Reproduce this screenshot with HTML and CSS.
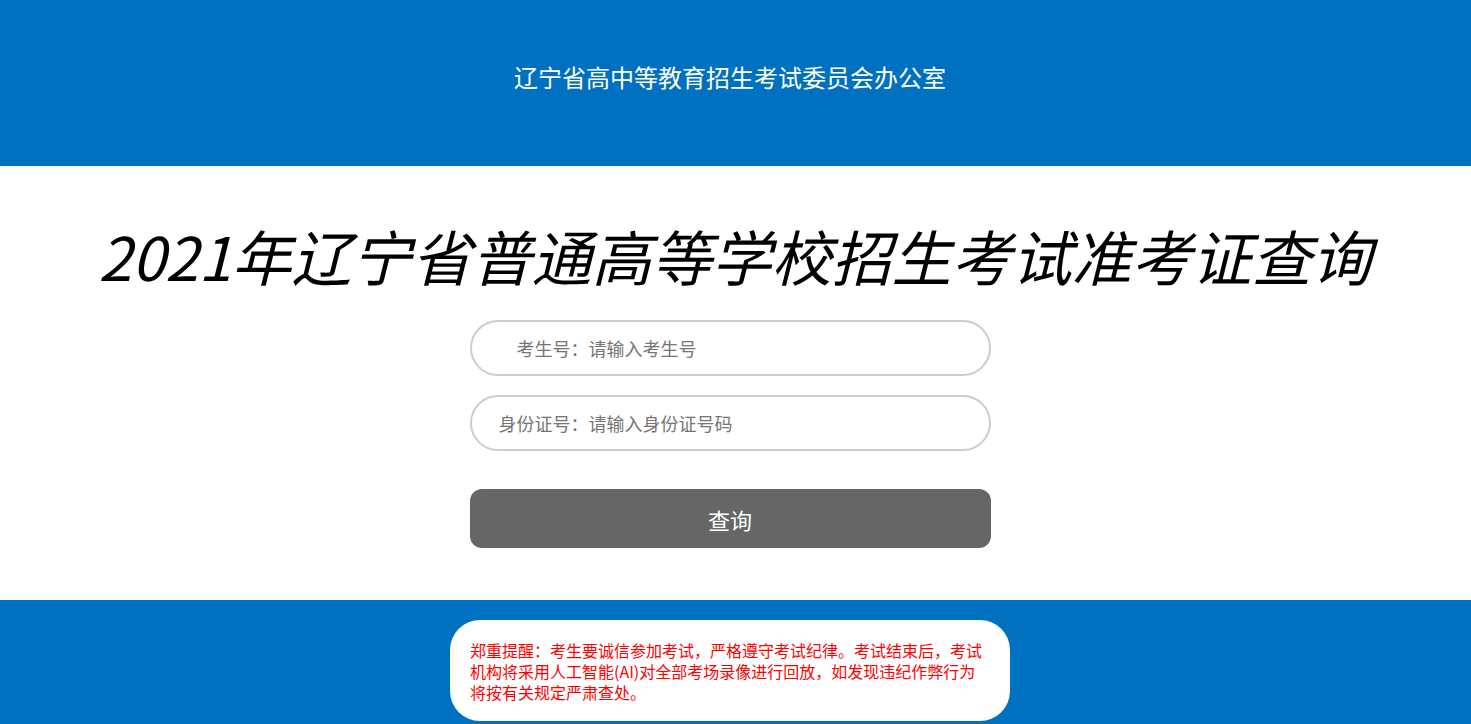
FILE: index.html
```html
<!DOCTYPE html>
<html lang="zh-CN">

<head>
    <meta charset="UTF-8">
    <meta name="viewport" content="width=device-width, initial-scale=1.0">
    <title>2021年辽宁省普通高等学校招生考试准考证查询</title>
    <link rel="stylesheet" href="styles.css">
</head>

<body>
    <!-- 顶部 -->
    <div class="header">
        <div class="header-title">辽宁省高中等教育招生考试委员会办公室</div>
    </div>

    <!-- 查询表单 -->
    <div class="main">
        <h1 class="page-title">2021年辽宁省普通高等学校招生考试准考证查询</h1>
        <form class="query-form" onsubmit="return false;">
            <input class="field field-ksh" type="text" placeholder="考生号：请输入考生号">
            <input class="field field-sfz" type="text" placeholder="身份证号：请输入身份证号码">
            <button class="btn-query" type="submit">查询</button>
        </form>
    </div>

    <!-- 底部提醒 -->
    <div class="footer">
        <div class="notice">
            郑重提醒：考生要诚信参加考试，严格遵守考试纪律。考试结束后，考试机构将采用人工智能(AI)对全部考场录像进行回放，如发现违纪作弊行为将按有关规定严肃查处。
        </div>
    </div>
</body>

</html>
```

FILE: styles.css
```css
html,
body {
    margin: 0;
    padding: 0;
}

body {
    font-family: "Noto Sans CJK SC", "Noto Sans", sans-serif;
    background-color: white;
    color: #333;
}

.header {
    background-color: #0070C0;
    height: 166px;
    box-sizing: border-box;
    padding: 60px 11px 0 0;
    text-align: center;
}

.header-title {
    color: white;
    font-size: 24px;
    line-height: 34px;
}

.main {
    height: 434px;
    box-sizing: border-box;
    padding-top: 51px;
    padding-right: 11px;
}

.page-title {
    margin: 0 0 27px 10px;
    text-align: center;
    font-size: 60px;
    line-height: 76px;
    font-weight: normal;
    font-style: italic;
    color: black;
    white-space: nowrap;
}

.query-form {
    width: 521px;
    margin: 0 auto;
    display: flex;
    flex-direction: column;
}

.field {
    height: 56px;
    box-sizing: border-box;
    border: 2px solid #ccc;
    border-radius: 28px;
    font-family: inherit;
    font-size: 18px;
    color: #333;
    outline: none;
    margin-bottom: 19px;
}

.field::placeholder {
    color: #757575;
}

.field-ksh {
    padding-left: 45px;
}

.field-sfz {
    padding-left: 27px;
}

.btn-query {
    margin-top: 19px;
    height: 59px;
    border: none;
    border-radius: 12px;
    background-color: #666;
    color: white;
    font-family: inherit;
    font-size: 22px;
    cursor: pointer;
}

.footer {
    background-color: #0070C0;
    height: 124px;
    box-sizing: border-box;
    padding: 20px 11px 0 0;
}

.notice {
    width: 560px;
    margin: 0 auto;
    box-sizing: border-box;
    padding: 20px 20px 18px 20px;
    background-color: white;
    border-radius: 30px;
    color: red;
    font-size: 16px;
    line-height: 21px;
    text-align: left;
}
```
